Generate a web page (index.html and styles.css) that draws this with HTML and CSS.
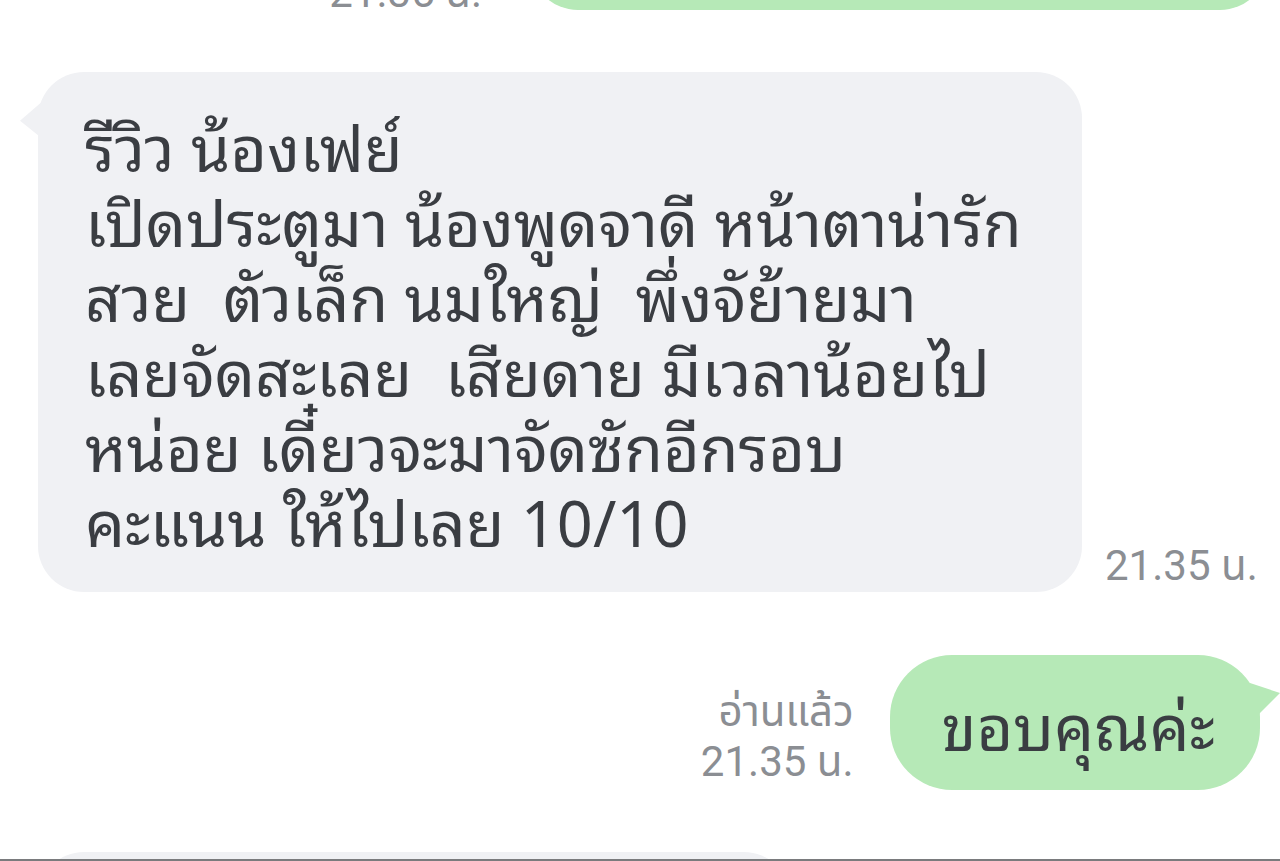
FILE: index.html
```html
<!DOCTYPE html>
<html lang="th">
<head>
<meta charset="utf-8">
<title>Chat</title>
<link rel="stylesheet" href="styles.css">
</head>
<body>
<div class="screen">
  <div class="chat">
    <div class="row out cut">
      <div class="meta"><span>21.35 น.</span></div>
      <div class="bubble green cut-bubble"></div>
    </div>

    <div class="row in first">
      <div class="bubble gray review">รีวิว น้องเฟย์<br>เปิดประตูมา น้องพูดจาดี หน้าตาน่ารัก<br>สวย&nbsp; ตัวเล็ก นมใหญ่&nbsp; พึ่งจัย้ายมา<br>เลยจัดสะเลย&nbsp; เสียดาย มีเวลาน้อยไป<br>หน่อย เดี๋ยวจะมาจัดซักอีกรอบ<br>คะแนน ให้ไปเลย 10/10</div>
      <div class="meta"><span>21.35 น.</span></div>
    </div>

    <div class="row out thanks">
      <div class="meta right"><span>อ่านแล้ว</span><span>21.35 น.</span></div>
      <div class="bubble green tail-right">ขอบคุณค่ะ</div>
    </div>

    <div class="row in next">
      <div class="bubble gray next-bubble"></div>
    </div>
  </div>
  <div class="edge"></div>
</div>
</body>
</html>
```

FILE: styles.css
```css
html, body {
  margin: 0;
  padding: 0;
  background: #ffffff;
}

.screen {
  width: 1280px;
  height: 861px;
  display: flex;
  flex-direction: column;
  overflow: hidden;
}

.chat {
  flex: 1;
  display: flex;
  flex-direction: column;
  overflow: hidden;
}

.row {
  display: flex;
  align-items: flex-end;
  flex-shrink: 0;
}

.row.out {
  justify-content: flex-end;
}

.bubble {
  position: relative;
  font-family: "Noto Sans Thai Looped", "Loma", "Garuda", "Waree", "Noto Sans Thai", "Noto Sans", sans-serif;
  color: #3a3d42;
  font-size: 63px;
  line-height: 75px;
  white-space: nowrap;
}

.gray {
  background: #f0f1f4;
}

.green {
  background: #b6e9b7;
}

.meta {
  display: flex;
  flex-direction: column;
  font-family: Roboto, "Noto Sans Thai", sans-serif;
  font-size: 42px;
  line-height: 50px;
  color: #8b8e93;
}

.meta.right {
  align-items: flex-end;
}

/* top cut-off outgoing message */
.row.cut {
  margin-top: -120px;
  padding-right: 12px;
}

.row.cut .meta {
  margin-right: 48px;
  margin-bottom: -8px;
}

.cut-bubble {
  width: 738px;
  height: 130px;
  border-radius: 48px;
}

/* review message */
.row.first {
  margin-top: 62px;
  padding-left: 38px;
}

.review {
  width: 1044px;
  box-sizing: border-box;
  padding: 34px 20px 36px 47px;
  border-radius: 46px;
}

.review::before {
  content: "";
  position: absolute;
  left: -18px;
  top: 28px;
  width: 24px;
  height: 40px;
  background: #f0f1f4;
  clip-path: polygon(100% 0, 0 52%, 100% 100%);
}

.row.first .meta {
  margin-left: 23px;
  margin-bottom: 1px;
}

/* thanks message */
.row.thanks {
  margin-top: 63px;
  padding-right: 20px;
  align-items: center;
}

.row.thanks .meta {
  margin-right: 36px;
  margin-top: 28px;
}

.tail-right {
  box-sizing: border-box;
  height: 135px;
  padding: 0 45px 0 52px;
  display: flex;
  align-items: center;
  border-radius: 62px;
}

.tail-right::after {
  content: "";
  position: absolute;
  right: -20px;
  top: 28px;
  width: 30px;
  height: 40px;
  background: #b6e9b7;
  clip-path: polygon(0 0, 100% 25%, 0 100%);
}

/* next message, cut at bottom */
.row.next {
  margin-top: 62px;
  padding-left: 38px;
}

.next-bubble {
  width: 752px;
  height: 120px;
  border-radius: 46px;
}

.edge {
  height: 2px;
  background: #7a7b7d;
  flex-shrink: 0;
}
```
